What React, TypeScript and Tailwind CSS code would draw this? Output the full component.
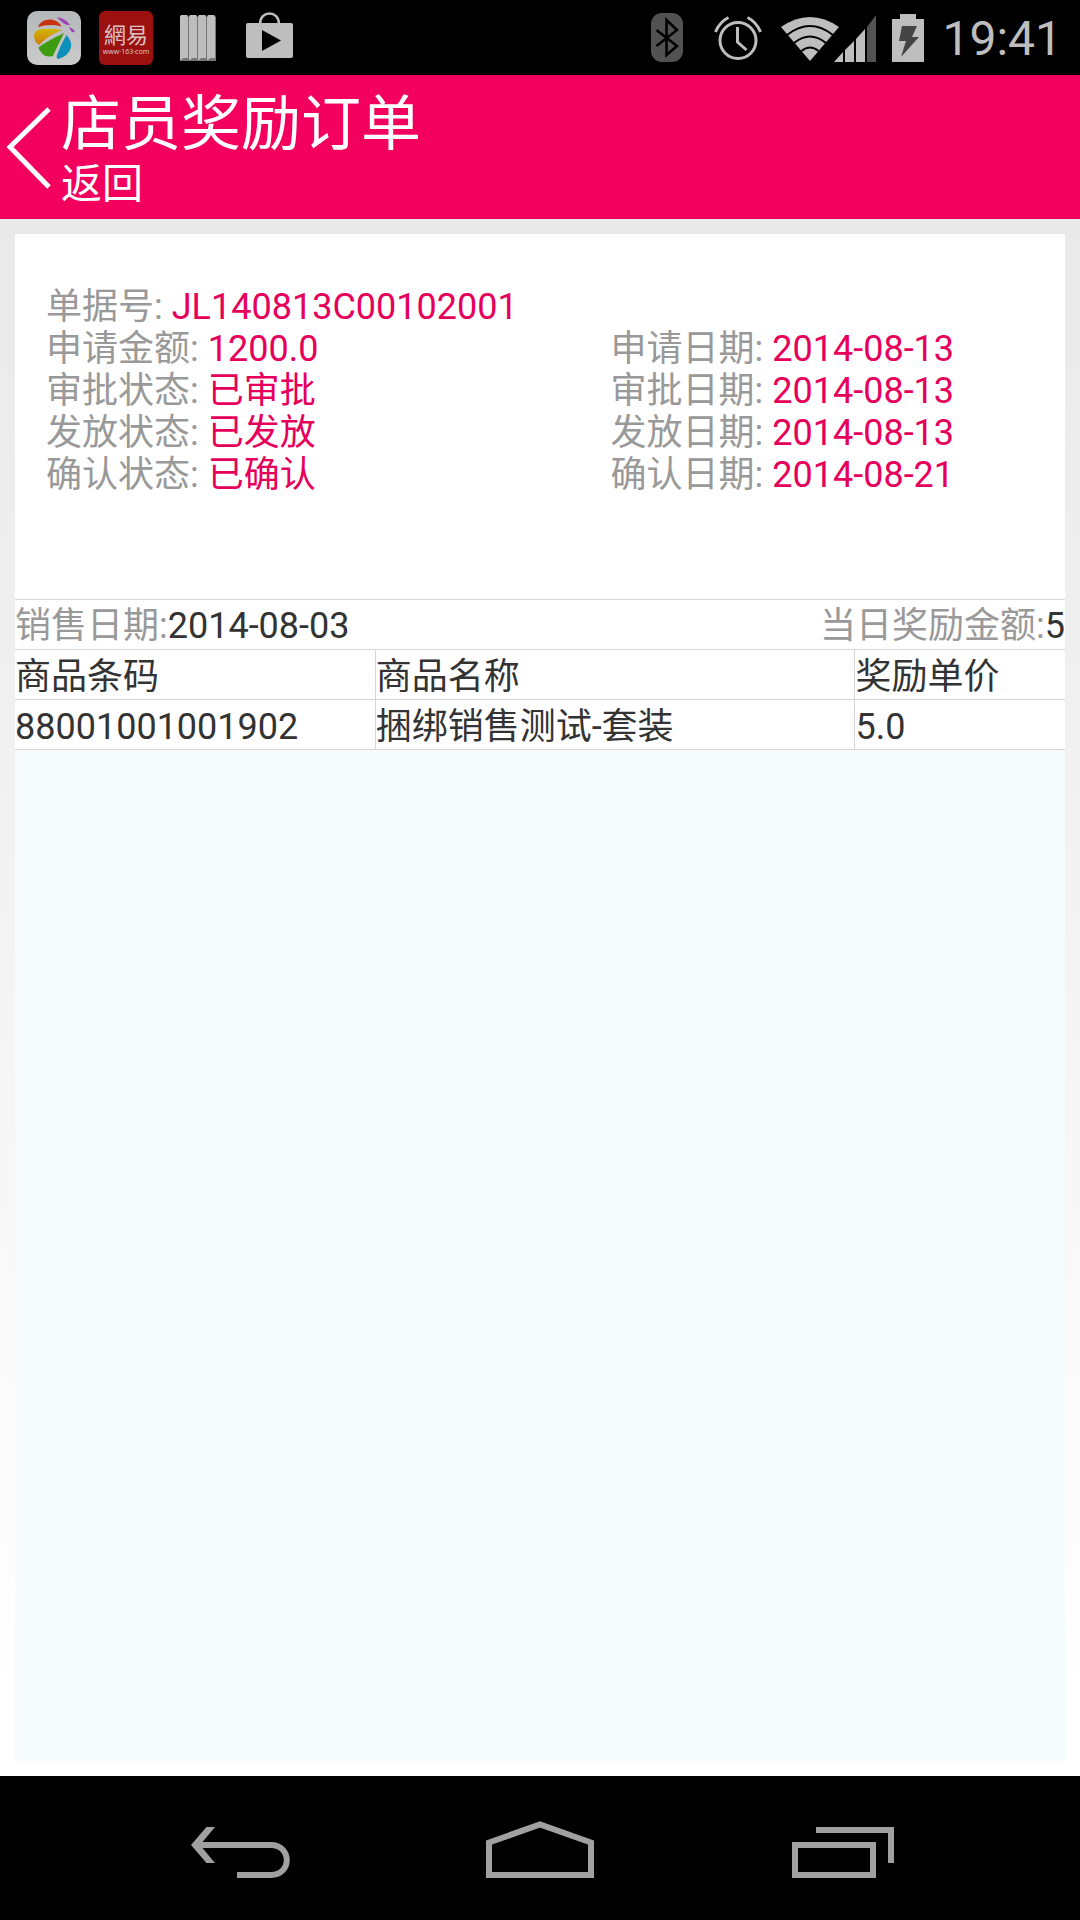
import React from "react";

const leftFields = [
  ["申请金额", "1200.0"],
  ["审批状态", "已审批"],
  ["发放状态", "已发放"],
  ["确认状态", "已确认"],
];

const rightFields = [
  ["申请日期", "2014-08-13"],
  ["审批日期", "2014-08-13"],
  ["发放日期", "2014-08-13"],
  ["确认日期", "2014-08-21"],
];

function Field({ label, value }: { label: string; value: string }) {
  return (
    <div className="flex gap-[9px] whitespace-nowrap">
      <dt className="text-[#999999]">{label}:</dt>
      <dd className="text-[#e6005c]">{value}</dd>
    </div>
  );
}

function StatusBar() {
  return (
    <div className="flex h-[75px] items-center justify-between bg-black pr-[18px] pl-[27px]">
      <div className="flex items-center">
        <svg className="size-[54px]" viewBox="0 0 54 54" aria-hidden="true">
          <defs>
            <linearGradient id="tile" x1="0" y1="0" x2="0" y2="1">
              <stop offset="0" stopColor="#b4b8ba" />
              <stop offset="1" stopColor="#cbcbcb" />
            </linearGradient>
            <linearGradient id="gold" x1="0" y1="0" x2="0" y2="1">
              <stop offset="0" stopColor="#cfb800" />
              <stop offset="1" stopColor="#d07a08" />
            </linearGradient>
          </defs>
          <rect width="54" height="54" rx="10" fill="url(#tile)" />
          <path d="M11 16Q14 8 24 8.500Q31 9 34.500 15.500Q23 12.500 11 16Z" fill="#c83210" />
          <path d="M30 6Q38 7 43 14Q40 14.500 37 12.500Q32 9.500 30 6Z" fill="#a040b8" />
          <path d="M42 16Q47 18 48 21Q46 22 44 20Z" fill="#a040b8" />
          <path d="M7 24Q8 18 16 18Q24 17 35 19Q23 23 12 34Q7 31 7 24Z" fill="url(#gold)" />
          <path d="M37 22Q30 36 26 45Q18 47 14 41Q11 38 12 36Q22 29 37 22Z" fill="#3e9c10" />
          <path d="M39.500 24Q45 30 44 36Q42 45 31 48Q29 47 30 44Q34 33 39.500 24Z" fill="#0c90bc" />
        </svg>
        <div className="ml-[18px] flex size-[54px] flex-col items-center justify-center rounded-[6px] bg-[#9c1010] text-[#d8c4c4]">
          <span className="font-['Noto_Sans_CJK_TC',sans-serif] text-[22px] leading-[28px]">網易</span>
          <span className="font-['Noto_Sans',sans-serif] text-[7px] leading-[10px]">www·163·com</span>
        </div>
        <svg className="ml-[27px] h-[46px] w-[36px]" viewBox="0 0 36 46" aria-hidden="true">
          {[0, 9, 18, 27].map((x) => (
            <g key={x}>
              <path d={`M${x} 2L${x + 1} 0H${x + 7}L${x + 9} 2V46H${x}Z`} fill="#777" />
              <path d={`M${x} 2L${x + 1} 0H${x + 7}L${x + 8} 2V43H${x + 3}L${x + 1} 45H${x}Z`} fill="#bebebe" />
            </g>
          ))}
        </svg>
        <svg className="ml-[30px] h-[52px] w-[47px]" viewBox="0 0 47 52" aria-hidden="true">
          <path d="M14 12C14 -2 33 -2 33 12" fill="none" stroke="#bebebe" strokeWidth="2.500" />
          <rect y="11" width="47" height="35" rx="2" fill="#bebebe" />
          <path d="M16 18L35 28.500L16 39Z" fill="#000" />
        </svg>
      </div>
      <div className="flex items-center">
        <svg className="h-[49px] w-[32px]" viewBox="0 0 32 49" aria-hidden="true">
          <rect width="32" height="49" rx="11" fill="#525252" />
          <path d="M5.500 17L26 33L15.500 42V7L26 17L5.500 33" fill="none" stroke="#000" strokeWidth="2.600" />
        </svg>
        <svg className="ml-[31px] h-[46px] w-[48px]" viewBox="0 0 48 46" aria-hidden="true">
          <g fill="none" stroke="#bebebe">
            <circle cx="24" cy="25.500" r="18" strokeWidth="3" />
            <path d="M1.500 17Q5.500 7 14.500 2.500M46.500 17Q42.500 7 33.500 2.500" strokeWidth="3" />
            <path d="M23.500 12V27L32.500 35" strokeWidth="3" />
          </g>
        </svg>
        <svg className="ml-[18px] h-[48px] w-[96px]" viewBox="0 0 96 48" aria-hidden="true">
          <path d="M1 13Q30 -7 59 13L30 47Z" fill="#bebebe" />
          <path d="M7 21Q30 3 53 21M14 29Q30 16 46 29M21.500 37Q30 30 38.500 37" fill="none" stroke="#000" strokeWidth="2" />
          <path d="M54 48L63 38V48ZM65 36L74 27V48H65ZM76 25L85 15V48H76Z" fill="#bebebe" />
          <path d="M87 13L96 1V48H87Z" fill="#525252" />
        </svg>
        <svg className="ml-[16px] h-[48px] w-[32px]" viewBox="0 0 32 48" aria-hidden="true">
          <path d="M8 0H24V5H32V48H0V5H8Z" fill="#bebebe" />
          <path d="M10 12H25L20 23H27L9 43L14 27H7Z" fill="#444" />
        </svg>
        <time className="ml-[18px] pt-[2px] font-[Roboto,sans-serif] text-[48px] leading-none text-[#bebebe]">19:41</time>
      </div>
    </div>
  );
}

export default function App() {
  return (
    <div className="flex min-h-screen flex-col bg-black font-[Roboto,'Noto_Sans_CJK_SC',sans-serif]" lang="zh-CN">
      <StatusBar />
      <header className="flex bg-[#f3005f] pb-[12px] text-white">
        <button type="button" aria-label="返回" className="mt-[30px] ml-[6px] h-[84px] w-[45px]">
          <svg viewBox="0 0 45 84" className="size-full" fill="none" stroke="#fff" strokeWidth="5" aria-hidden="true">
            <path d="M43 4L4 42L43 82" />
          </svg>
        </button>
        <div className="ml-[10px] pt-[14px]">
          <h1 className="text-[60px] leading-[72px]">店员奖励订单</h1>
          <a href="#" className="block text-[41px] leading-[46px]">返回</a>
        </div>
      </header>
      <main className="flex grow flex-col bg-linear-to-b from-[#e9e9e9] to-white to-95% p-[15px] text-[36px] leading-[42px]">
        <section className="bg-white px-[31px] pt-[52px] pb-[103px]">
          <dl>
            <Field label="单据号" value="JL140813C00102001" />
            <div className="grid grid-cols-[4fr_3fr]">
              <div>
                {leftFields.map(([label, value]) => (
                  <Field key={label} label={label} value={value} />
                ))}
              </div>
              <div>
                {rightFields.map(([label, value]) => (
                  <Field key={label} label={label} value={value} />
                ))}
              </div>
            </div>
          </dl>
        </section>
        <section className="grow bg-[#f6fbfe] text-[#333333]">
          <div className="flex h-[50px] items-center justify-between border-t border-[#d5d5d5] bg-white pt-[3px] whitespace-nowrap">
            <p>
              <span className="text-[#999999]">销售日期:</span>2014-08-03
            </p>
            <p>
              <span className="text-[#999999]">当日奖励金额:</span>5
            </p>
          </div>
          <table className="w-full table-fixed border-collapse bg-white text-left">
            <colgroup>
              <col className="w-[34.3%]" />
              <col className="w-[45.7%]" />
              <col className="w-[20%]" />
            </colgroup>
            <thead>
              <tr className="h-[50px] border-y border-[#d5d5d5]">
                <th className="border-r border-[#d5d5d5] pt-[4px] font-normal">商品条码</th>
                <th className="border-r border-[#d5d5d5] pt-[4px] font-normal">商品名称</th>
                <th className="pt-[4px] font-normal">奖励单价</th>
              </tr>
            </thead>
            <tbody>
              <tr className="h-[50px] border-y border-[#d5d5d5]">
                <td className="border-r border-[#d5d5d5] pt-[4px]">88001001001902</td>
                <td className="border-r border-[#d5d5d5] pt-[4px]">捆绑销售测试-套装</td>
                <td className="pt-[4px]">5.0</td>
              </tr>
            </tbody>
          </table>
        </section>
      </main>
      <nav className="grid h-[144px] grid-cols-3 bg-black px-[90px] pt-[6px]">
        <button type="button" aria-label="Back" className="flex items-center justify-center">
          <svg className="h-[60px] w-[108px]" viewBox="0 0 108 60" fill="none" stroke="#a0a0a0" strokeWidth="6" aria-hidden="true">
            <path d="M14 24H85C106 24 106 54 85 54H51" />
            <path d="M20.500 6H29L14 24L29 42H20.500L5 24Z" fill="#a0a0a0" stroke="none" />
          </svg>
        </button>
        <button type="button" aria-label="Home" className="flex items-center justify-center">
          <svg className="h-[60px] w-[108px]" viewBox="0 0 108 60" fill="none" stroke="#a0a0a0" strokeWidth="6" aria-hidden="true">
            <path d="M3 54V21.500L54 3.500L105 21.500V54Z" />
          </svg>
        </button>
        <button type="button" aria-label="Recent apps" className="flex items-center justify-center">
          <svg className="h-[60px] w-[108px]" viewBox="0 0 108 60" fill="none" stroke="#a0a0a0" strokeWidth="6" aria-hidden="true">
            <path d="M9 24H87V54H9Z" />
            <path d="M30 9H105V42" />
          </svg>
        </button>
      </nav>
    </div>
  );
}
